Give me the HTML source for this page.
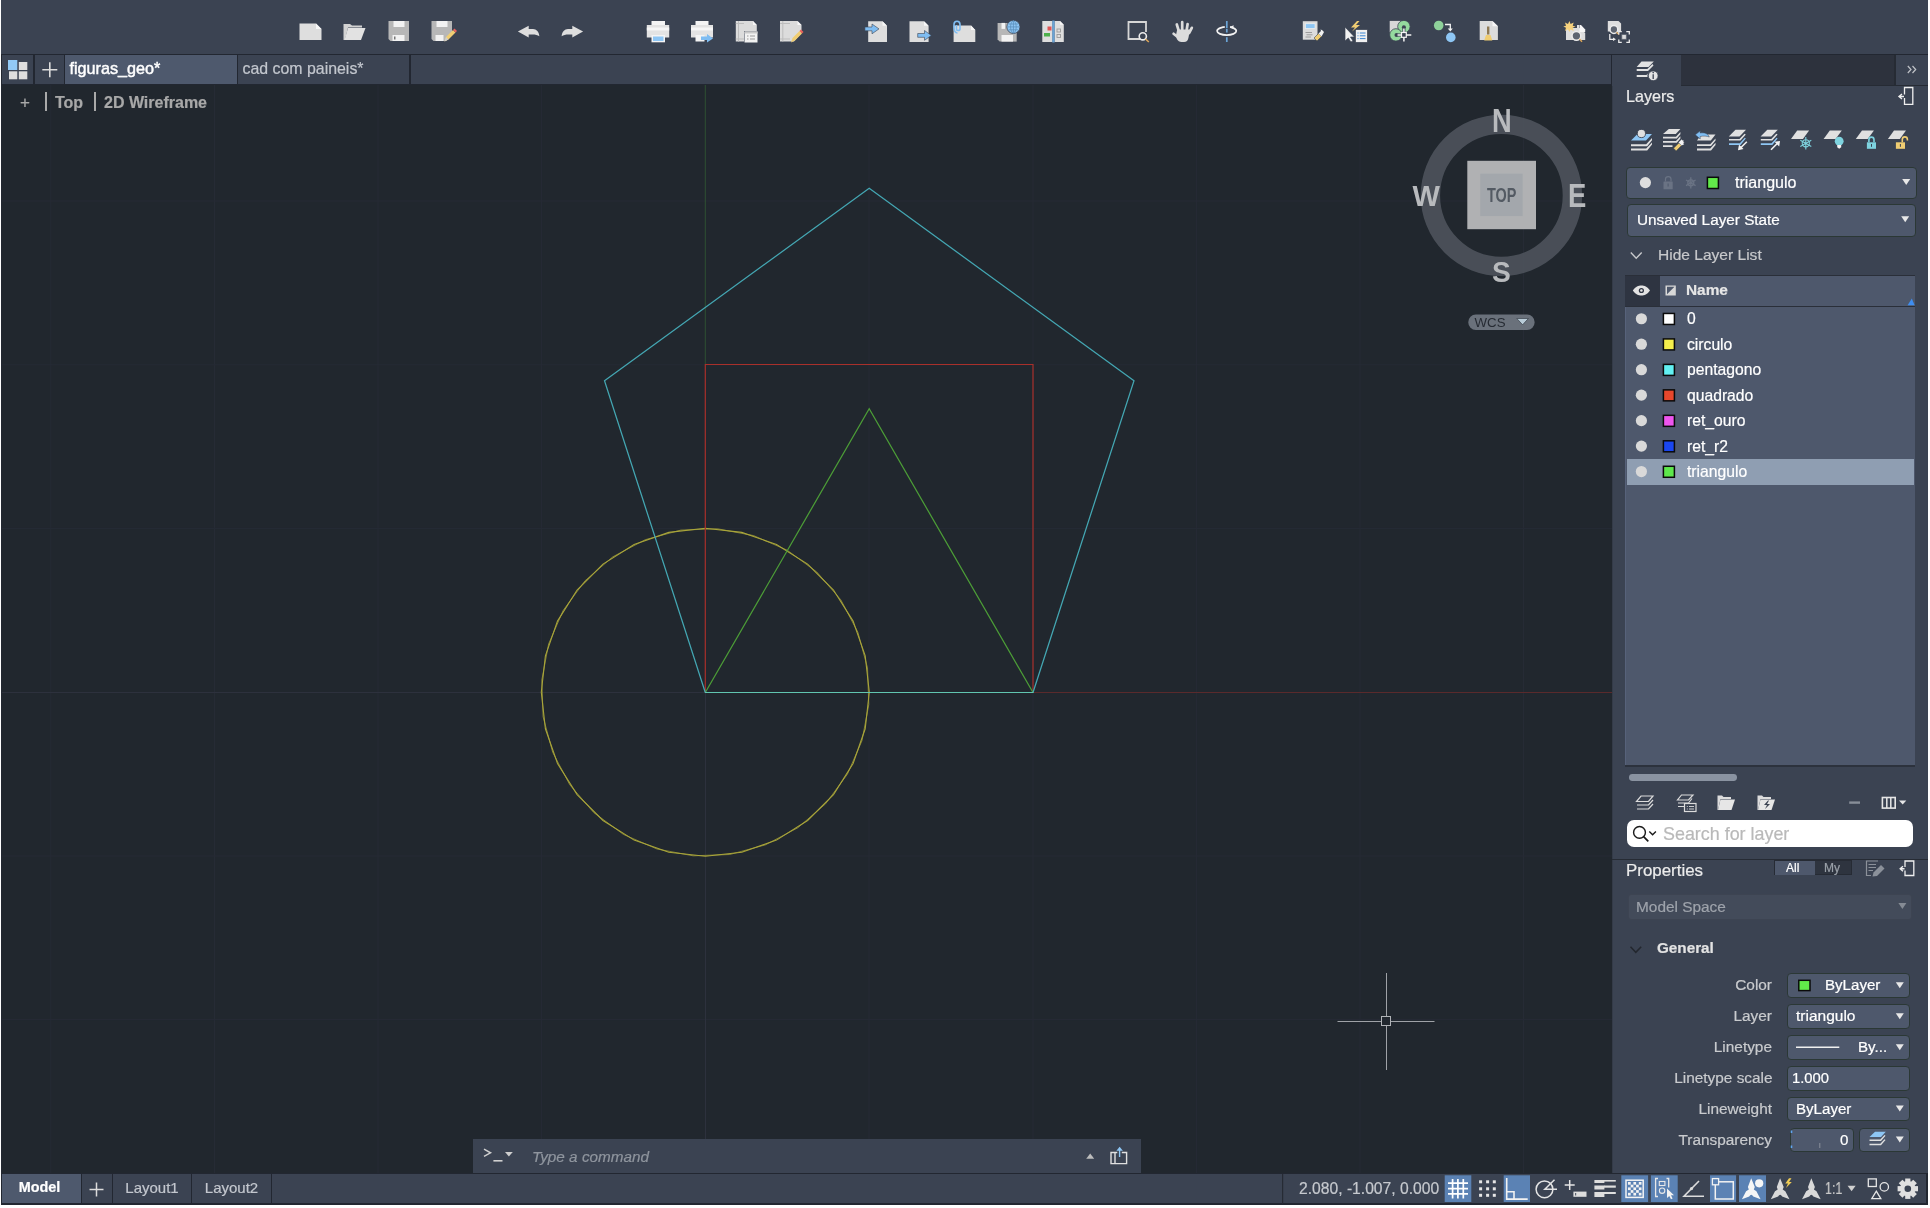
<!DOCTYPE html>
<html><head><meta charset="utf-8">
<style>
html,body{margin:0;padding:0;background:#fff;width:1930px;height:1208px;overflow:hidden}
*{box-sizing:border-box}
body{font-family:"Liberation Sans",sans-serif;position:relative}
.a{position:absolute}
#app{position:absolute;left:1px;top:0;width:1927px;height:1205px;background:#222731;overflow:hidden}
#tb{position:absolute;left:0;top:0;width:1927px;height:54px;background:#3b4352}
#tabrow{position:absolute;left:0;top:54px;width:1611px;height:31px;background:#222731}
.tab{position:absolute;top:1px;height:29px;background:#3b4352;color:#c3c7ce;font-size:15px;line-height:28px}
#vp{position:absolute;left:1px;top:85px;width:1610px;height:1088px;background:#21272e;overflow:hidden}
#panel{position:absolute;left:1611px;top:55px;width:316px;height:1118px;background:#3b4352}
.dd{position:absolute;background:#4e586c;border:1.5px solid #2b3835;border-radius:4px}
.wt{position:absolute;white-space:nowrap;color:#fff;font-size:15.5px;line-height:18px}
.lb{position:absolute;white-space:nowrap;color:#c9cbce;font-size:15.4px;line-height:18px;text-align:right}
#sb{position:absolute;left:0;top:1173px;width:1927px;height:32px;background:#222731}
.stab{position:absolute;top:1px;height:29px;background:#3b4352;color:#c3c7ce;font-size:15px;line-height:27px;text-align:center}
.t{position:absolute;white-space:nowrap}
.t,.wt,.lb,.tab,.stab{will-change:transform;-webkit-text-stroke:0.2px currentColor}
</style></head>
<body>
<div id="app">
  <div id="tb"></div>
<svg class="a" style="left:-1px;top:0" width="1930" height="54" viewBox="0 0 1930 54">
<g id="tbi">
 <!-- New -->
 <path d="M299.5 23.5H316L321.5 29V40H299.5Z" fill="#dedede"/><path d="M316 23.5V29H321.5Z" fill="#f7f7f7"/>
 <!-- Open -->
 <path d="M343.5 24H350L352 25.5H362V27.5H348L345 40H343.5Z" fill="#d2d2d2"/><path d="M348 28H365.5L361 40H344.5Z" fill="#e2e2e2"/>
 <!-- Save -->
 <path d="M388.5 21H409V41H390.5L388.5 39Z" fill="#b7b7b7"/><rect x="393.5" y="21" width="11" height="6" fill="#f2f2f2"/><rect x="392.5" y="35" width="12" height="6" fill="#f2f2f2"/><rect x="394" y="36.5" width="1.5" height="3" fill="#777"/>
 <!-- SaveAs -->
 <path d="M431.5 21H452V34L446 41H433.5L431.5 39Z" fill="#b7b7b7"/><rect x="436.5" y="21" width="11" height="6" fill="#f2f2f2"/><rect x="435.5" y="35" width="8" height="6" fill="#f2f2f2"/>
 <path d="M444.5 41.5L446 37L453 30L455.5 32.5L448.5 39.5Z" fill="#f0cd72"/><path d="M453 30L454.5 28.5L457 31L455.5 32.5Z" fill="#e8615c"/><path d="M444.5 41.5L446 37L448.5 39.5Z" fill="#cfcfcf"/>
 <!-- Undo -->
 <path d="M517.9 31.5L528.7 25.7V29H533C536.5 29 539 32 539.4 36.2C537.5 35 535.5 34.4 532.5 34.4H528.7V37.5Z" fill="#dedede"/>
 <!-- Redo -->
 <path d="M583.1 31.5L572.3 25.7V29H568C564.5 29 562 32 561.6 36.2C563.5 35 565.5 34.4 568.5 34.4H572.3V37.5Z" fill="#dedede"/>
 <!-- Print -->
 <rect x="651.5" y="21" width="13.5" height="6.5" fill="#f4f4f4"/><path d="M646.8 25H669.2V37.5H646.8Z" fill="#e3e3e3"/><rect x="646.8" y="27.5" width="22.4" height="3" fill="#f6f6f6"/><rect x="651.5" y="35" width="13.5" height="7.3" fill="#f4f4f4"/><rect x="653" y="36.5" width="10.5" height="4.5" fill="#8ec6f4"/>
 <!-- Publish -->
 <rect x="695.5" y="21" width="13" height="6.5" fill="#f4f4f4"/><path d="M691 25H713V37.5H691Z" fill="#e3e3e3"/><rect x="691" y="27.5" width="22" height="3" fill="#f6f6f6"/><rect x="695.5" y="35" width="9" height="6.5" fill="#f4f4f4"/>
 <path d="M701 36.5H707V34L713 38.5L707 42.5V40H701Z" fill="#7fbdf2"/>
 <!-- Page setup -->
 <path d="M735.8 21H753L756.8 25V31H744V41.5H735.8Z" fill="#dcdcdc"/><path d="M738.5 21V41.5M735.8 23.5H744M735.8 39H744" stroke="#bdbdbd" stroke-width="1"/><path d="M753 21V25H756.8Z" fill="#f7f7f7"/>
 <rect x="744.5" y="31.5" width="13" height="11" fill="#f2f2f2"/><rect x="744.5" y="31.5" width="13" height="2" fill="#c9c9c9"/><path d="M747 36H748.5M750 36H755M747 39H748.5M750 39H755" stroke="#9a9a9a" stroke-width="1.2"/>
 <!-- Plot style -->
 <path d="M780 21H797.5L801.5 25V33L794 41.5H780Z" fill="#dcdcdc"/><path d="M782.8 21V41.5M780 23.5H790M780 39H790" stroke="#bdbdbd" stroke-width="1"/><path d="M797.5 21V25H801.5Z" fill="#f7f7f7"/>
 <path d="M791 42.5L792.5 38L799.5 31L802 33.5L795 40.5Z" fill="#f0cd72"/><path d="M799.5 31L801 29.5L803.5 32L802 33.5Z" fill="#e8615c"/>
 <!-- Import -->
 <path d="M868.2 21.2H882.5L887 25.7V41.9H868.2Z" fill="#dedede"/><path d="M882.5 21.2V25.7H887Z" fill="#f7f7f7"/><path d="M864.9 27H872V24L879 28.9L872 33.8V30.8H864.9Z" fill="#7fbdf2" stroke="#3b4352" stroke-width=".6"/>
 <!-- Export -->
 <path d="M909.5 21.2H924L928.6 25.7V41.9H909.5Z" fill="#dedede"/><path d="M924 21.2V25.7H928.6Z" fill="#f7f7f7"/><path d="M917.7 33.5H924.5V30.5L931.3 35.4L924.5 40.3V37.3H917.7Z" fill="#7fbdf2" stroke="#3b4352" stroke-width=".6"/>
 <!-- Attach -->
 <path d="M953.6 25.6H971L975.3 30V41.9H953.6Z" fill="#dedede"/><path d="M971 25.6V30H975.3Z" fill="#f7f7f7"/><path d="M957.5 33C954.5 33 954 30 954 27V24.5C954 22 955.5 21.2 957 21.2C958.8 21.2 960 22.5 960 24.5V29C960 30 959 30.5 958 30.5C957 30.5 956.5 30 956.5 29V25" fill="none" stroke="#7fbdf2" stroke-width="1.6"/>
 <!-- eTransmit -->
 <path d="M997.6 22.9H1011V41.6H999.6L997.6 39.6Z" fill="#b7b7b7"/><path d="M1011 30H1016.7V41.6H1011Z" fill="#b7b7b7"/><rect x="1001.5" y="22.9" width="3.5" height="6" fill="#f2f2f2"/><rect x="1001.5" y="35" width="11.5" height="6.6" fill="#f2f2f2"/>
 <circle cx="1013.4" cy="26.9" r="6.6" fill="#8ec6f4" stroke="#3b4352" stroke-width=".8"/><path d="M1013.4 20.6V33.2M1007.2 26.9H1019.6M1008.5 24H1018.3M1008.5 29.8H1018.3" stroke="#5a8fbd" stroke-width=".8"/><ellipse cx="1013.4" cy="26.9" rx="2.8" ry="6" fill="none" stroke="#5a8fbd" stroke-width=".8"/>
 <!-- Compare -->
 <path d="M1042.3 21H1052.5V42H1042.3Z" fill="#dedede"/><path d="M1054.5 21H1060L1063.8 24.8V42H1054.5Z" fill="#dedede"/><path d="M1060 21V24.8H1063.8Z" fill="#f7f7f7"/><rect x="1052.3" y="20.5" width="2.3" height="22" fill="#6aa4d6"/>
 <rect x="1047.5" y="26.5" width="4" height="4" fill="#e05555"/><rect x="1044" y="33" width="6" height="3.5" fill="#4cb04c"/><rect x="1057" y="29" width="3.5" height="3" fill="none" stroke="#9a9a9a" stroke-width=".9"/><rect x="1057" y="34.5" width="3.5" height="3" fill="none" stroke="#9a9a9a" stroke-width=".9"/>
 <!-- Zoom window -->
 <path d="M1140 39H1128.5V22H1146V32" fill="none" stroke="#d6d6d6" stroke-width="1.8"/><circle cx="1142.8" cy="36.3" r="3.6" fill="#3b4352" stroke="#ececec" stroke-width="1.6"/><path d="M1145.5 39L1148.8 42" stroke="#e0a85a" stroke-width="1.5"/>
 <!-- Pan -->
 <g stroke="#dcdcdc" stroke-width="2.7" stroke-linecap="round" fill="none"><path d="M1173.6 33.8L1178 37.2M1176.8 24.5L1178.8 31M1182.2 22.2V30M1187.6 24L1186.6 30.5M1191.8 27.8L1189.2 33"/></g>
 <path d="M1177.2 29.5H1190L1188.5 37.5C1188 40.5 1186.5 42 1184 42H1181.5C1179.5 42 1178 41 1176.8 39L1176 35Z" fill="#dcdcdc"/>
 <!-- Orbit -->
 <ellipse cx="1226.7" cy="31" rx="9.6" ry="4.1" fill="none" stroke="#f2f2f2" stroke-width="1.7"/>
 <rect x="1224.8" y="25" width="5.2" height="3.2" fill="#3b4352"/>
 <path d="M1229.6 27L1233.6 25.2L1233.4 28.8Z" fill="#f2f2f2"/>
 <path d="M1226.8 21V28.2M1226.8 29V32.6M1226.8 37.3V42.1" stroke="#6aa4d6" stroke-width="1.7"/>
 <!-- Block/attr -->
 <path d="M1302.8 21.2H1317.5V39.7H1302.8Z" fill="#dcdcdc"/><rect x="1305.5" y="23.8" width="9.5" height="4.5" fill="#8ec6f4" stroke="#f5f5f5" stroke-width=".6"/><path d="M1305.5 32.5H1312M1306.5 34.8H1312.5M1305.5 37H1311" stroke="#8a8a8a" stroke-width=".8"/>
 <path d="M1314 38L1318.5 33.5L1321.5 36.5L1317 41Z" fill="#f0cd72" stroke="#3b4352" stroke-width=".6"/><path d="M1318.5 33.5L1321 31L1320.5 29.5L1322 30L1324 32L1323.5 33L1321.5 36.5Z" fill="#f0f0f0"/>
 <!-- Quick select -->
 <path d="M1345 27V41L1348.3 38L1350.8 42L1353 41L1350.5 37H1354.5Z" fill="#f2f2f2" stroke="#3b4352" stroke-width=".7"/><path d="M1357 21L1351 27.5H1355L1352 31.5L1360 25H1356L1359.5 21Z" fill="#f0cd72"/>
 <rect x="1355.6" y="29.7" width="11.7" height="12.6" fill="#f0f0f0" stroke="#3b4352" stroke-width=".6"/><path d="M1357.5 33H1358.5M1359.8 33H1365.5M1357.5 35.8H1358.5M1359.8 35.8H1365.5M1357.5 38.6H1358.5M1359.8 38.6H1365.5" stroke="#3a86d4" stroke-width="1"/>
 <!-- Select similar -->
 <rect x="1389.7" y="20.9" width="12" height="11.5" fill="#d8d8d8"/><circle cx="1403.9" cy="26.6" r="6.2" fill="#94d99e" stroke="#3b4352" stroke-width=".8"/><circle cx="1403.9" cy="27.2" r="2" fill="#3b4352"/><circle cx="1395.9" cy="34.9" r="6.2" fill="#94d99e" stroke="#3b4352" stroke-width=".8"/><circle cx="1396.5" cy="34.9" r="2" fill="#3b4352"/>
 <path d="M1403.9 28.5V41.5M1397.5 34.9H1411.3" stroke="#3b4352" stroke-width="3"/><path d="M1403.9 28.5V41.5M1397.5 34.9H1411.3" stroke="#f4f4f4" stroke-width="1.5"/><rect x="1401.5" y="32.5" width="4.8" height="4.8" fill="#3b4352" stroke="#f4f4f4" stroke-width="1.2"/>
 <!-- Data link -->
 <circle cx="1438.7" cy="25.5" r="4.8" fill="#8ed19a"/><circle cx="1450.8" cy="37.4" r="4.8" fill="#8ec6f4"/><path d="M1445 24.5H1450.3V29" fill="none" stroke="#f4f4f4" stroke-width="1.3"/><path d="M1447.8 28.5H1452.8L1450.3 31.5Z" fill="#f4f4f4"/>
 <!-- Purge-like doc -->
 <path d="M1479.7 20.9H1492.5L1497.9 26.3V40H1479.7Z" fill="#dcdcdc"/><path d="M1492.5 20.9V26.3H1497.9Z" fill="#f7f7f7"/><rect x="1487" y="26.5" width="2.4" height="8" fill="#8f7a55"/><path d="M1484.2 40.5L1486 35H1490.5L1492.3 40.5Z" fill="#f0cd72"/>
 <!-- Sixth -->
 <path d="M1566 28H1579.5L1585.2 33V40H1566Z" fill="#dedede"/><path d="M1579.5 25H1581L1585.2 29.5V32H1579.5Z" fill="#f7f7f7"/><rect x="1577" y="25" width="2" height="3" fill="#dedede"/>
 <path d="M1569.4 21L1570.6 24L1573.7 22.5L1572.7 25.8L1575.5 26.5L1572.7 27.8L1573.7 31L1570.6 29.3L1569.4 32L1568 29.3L1565 31L1566 27.8L1563.3 26.5L1566 25.8L1565 22.5L1568 24Z" fill="#f6d27e"/>
 <circle cx="1576.4" cy="35.8" r="4.4" fill="#5d6470" stroke="#ececec" stroke-width="1.5"/><path d="M1579.5 39L1582 41.7" stroke="#e0a85a" stroke-width="1.4"/>
 <!-- Seventh -->
 <path d="M1607.8 20.9H1618.5L1621.1 23.5V31.6H1607.8Z" fill="#dedede"/><circle cx="1613.9" cy="29.5" r="3.9" fill="#5d6470" stroke="#ececec" stroke-width="1.5"/><path d="M1616.5 32.2L1619 34.6" stroke="#e0a85a" stroke-width="1.3"/>
 <path d="M1609.8 34V39.3H1613.5" fill="none" stroke="#ececec" stroke-width="1.3"/><path d="M1613 37.5L1616 39.3L1613 41Z" fill="#ececec"/>
 <path d="M1618.8 34.5V31.6H1621.8M1626.3 31.6H1629.3V34.5M1629.3 39.4V42.3H1626.3M1621.8 42.3H1618.8V39.4" fill="none" stroke="#ececec" stroke-width="1.3"/><rect x="1621.8" y="34.6" width="4.5" height="4.7" fill="#dcdcdc" stroke="#5d6470" stroke-width=".8"/>
</g>
</svg>

  <div id="tabrow">
    <div class="tab" style="left:1px;width:31px"></div>
    <div class="tab" style="left:34px;width:29px"></div>
    <div class="tab" style="left:64px;width:172px;background:#4e596d;color:#fff;padding-left:4.5px;font-size:16.2px;line-height:26.5px;-webkit-text-stroke:.45px #fff">figuras_geo*</div>
    <div class="tab" style="left:237px;width:171px;padding-left:4.5px;font-size:15.9px;line-height:27px">cad com paineis*</div>
    <div class="tab" style="left:410px;width:1200px"></div>
    <svg class="a" style="left:-1px;top:-54px" width="70" height="90" viewBox="0 0 70 90">
      <rect x="8" y="60" width="9.3" height="10" fill="#92c9f5"/><rect x="18.8" y="62" width="8.5" height="8" fill="#dedede"/>
      <rect x="9" y="71.3" width="8.3" height="8" fill="#dedede"/><rect x="18.8" y="71.3" width="8.5" height="8" fill="#dedede"/>
      <path d="M42.3 69.8H57.3M49.8 62.3V77.3" stroke="#dcdcdc" stroke-width="1.6"/>
    </svg>
  </div>
  <div id="vp"></div>
<svg class="a" style="left:-1px;top:0" width="1930" height="1208" viewBox="0 0 1930 1208">
 <defs><clipPath id="vpc"><rect x="2" y="85" width="1610" height="1088"/></clipPath></defs>
 <g clip-path="url(#vpc)" fill="none" stroke-width="1">
  <g stroke="#262b35">
   <path d="M50.8 85V1173M214.5 85V1173M378 85V1173M541.6 85V1173M869 85V1173M1033 85V1173M1196.6 85V1173M1360 85V1173M1523.5 85V1173"/>
   <path d="M2 201H1612M2 364.8H1612M2 528.4H1612M2 856H1612M2 1019.6H1612"/>
  </g>
  <path d="M705.5 692.5V1173M2 692.5H705" stroke="#2d313d"/>
  <path d="M1033 692.5H1612" stroke="#5a2a2c"/>
  <path d="M705.3 85V364" stroke="#2f5133"/>
  <polygon points="705.3,856.3 741.8,852.2 776.5,840.1 807.6,820.5 833.5,794.6 853.1,763.5 865.2,728.8 869.3,692.3 865.2,655.8 853.1,621.1 833.5,590.0 807.6,564.1 776.5,544.5 741.8,532.4 705.3,528.3 668.8,532.4 634.1,544.5 603.0,564.1 577.1,590.0 557.5,621.1 545.4,655.8 541.3,692.3 545.4,728.8 557.5,763.5 577.1,794.6 603.0,820.5 634.1,840.1 668.8,852.2" stroke="#a9a53a" stroke-width="1.1"/><polygon points="729.8,854.5 765.3,844.9 797.8,827.8 825.6,803.8 847.4,774.2 862.0,740.6 868.8,704.5 867.5,667.8 857.9,632.3 840.8,599.8 816.8,572.0 787.2,550.2 753.6,535.6 717.5,528.8 680.8,530.1 645.3,539.7 612.8,556.8 585.0,580.8 563.2,610.4 548.6,644.0 541.8,680.1 543.1,716.8 552.7,752.3 569.8,784.8 593.8,812.6 623.4,834.4 657.0,849.0 693.1,855.8" stroke="#a9a53a" stroke-opacity=".7" stroke-width="1"/>
  <path d="M705.3 692.5V364.5H1033V692.5" stroke="#a8302b" stroke-width="1.2"/>
  <path d="M705.3 692.5L869.2 408.8L1033 692.5" stroke="#4c9d37" stroke-width="1.25"/>
  <path d="M705.3 692.5L604.5 380.8L869.2 188.3L1134 380.8L1033 692.5" stroke="#44a7b3" stroke-width="1.25"/>
  <path d="M705 692.5H1033.5" stroke="#61c6b0"/>
  <g stroke="#9fa2a7"><path d="M1337.5 1021.5H1381.5M1391 1021.5H1434.5M1386.5 973V1017M1386.5 1026V1070"/><rect x="1381.5" y="1016.5" width="9" height="9" stroke="#b0b3b7"/></g>
 </g>
</svg>
  
<div class="t" style="left:19px;top:94.3px;color:#a9a9a9;font-size:17px;line-height:17px">+</div>
<div class="a" style="left:44px;top:92px;width:2px;height:19px;background:#a9a9a9"></div>
<div class="t" id="lTop" style="left:53.5px;top:94.4px;color:#a8a8a8;font-size:16px;font-weight:bold;line-height:17px">Top</div>
<div class="a" style="left:93px;top:92px;width:2px;height:19px;background:#a9a9a9"></div>
<div class="t" id="lWire" style="left:102.5px;top:94.4px;color:#a8a8a8;font-size:16px;font-weight:bold;line-height:17px">2D Wireframe</div>

<div class="a" style="left:472px;top:1139px;width:668px;height:34px;background:#3b4352"></div>
<svg class="a" style="left:471px;top:1139px" width="670" height="34" viewBox="472 1139 670 34">
  <path d="M484 1149.2L490.5 1152.8L484 1156.3" fill="none" stroke="#d0d0d0" stroke-width="1.5"/>
  <path d="M493.4 1160.8H502.5" stroke="#d0d0d0" stroke-width="1.6"/>
  <path d="M505 1152H512.8L508.9 1156.4Z" fill="#cfcfcf"/>
  <path d="M1086.2 1158.8H1094.2L1090.2 1153.4Z" fill="#bdbdbd"/>
  <path d="M1117.3 1152.5H1111V1163.6H1126.6V1152.5H1121.8M1115 1152.5V1163.6" fill="none" stroke="#e0e0e0" stroke-width="1.4"/>
  <path d="M1119.6 1157V1150" stroke="#8ec6f4" stroke-width="1.4"/><path d="M1116.4 1150.8H1122.9L1119.6 1146.7Z" fill="#8ec6f4"/>
</svg>
<div class="t" style="left:531px;top:1147.5px;color:#8f959e;font-size:15.3px;font-style:italic;line-height:18px">Type a command</div>
<div id="panel"></div>

<svg class="a" style="left:1399px;top:95px;will-change:transform" width="200" height="250" viewBox="1400 95 200 250">
  <circle cx="1501.4" cy="195.4" r="71" fill="none" stroke="#4e535c" stroke-opacity=".9" stroke-width="19.4"/>
  <rect x="1467.3" y="160.8" width="68.7" height="68.4" fill="#b5b6b8" fill-opacity=".97"/>
  <rect x="1480.3" y="173.7" width="42.3" height="42.4" fill="#a3a7ac"/>
  <text x="1501.7" y="202.3" text-anchor="middle" font-family="Liberation Sans" font-weight="bold" font-size="19.5" fill="#535a63" textLength="29.4" lengthAdjust="spacingAndGlyphs">TOP</text>
  <g font-family="Liberation Sans" font-weight="bold" fill="#b8babd" text-anchor="middle">
   <text x="1501.8" y="132.3" font-size="33" textLength="19.7" lengthAdjust="spacingAndGlyphs">N</text>
   <text x="1501.4" y="282" font-size="30" textLength="18.8" lengthAdjust="spacingAndGlyphs">S</text>
   <text x="1426.1" y="205.8" font-size="29" textLength="27.4" lengthAdjust="spacingAndGlyphs">W</text>
   <text x="1577.2" y="206.8" font-size="33" textLength="18.3" lengthAdjust="spacingAndGlyphs">E</text>
  </g>
  <rect x="1468.3" y="314.5" width="66.3" height="15.5" rx="7.5" fill="#6a717b"/>
  <text x="1490" y="326.9" text-anchor="middle" font-family="Liberation Sans" font-size="13" fill="#262b33" textLength="31" lengthAdjust="spacingAndGlyphs">WCS</text>
  <path d="M1516.8 318.5H1528.4L1522.6 324.8Z" fill="#b9ccd8" stroke="#3a414b" stroke-width=".7"/>
</svg>

  <div id="sb">
    <div class="stab" style="left:1px;width:79px;background:#4e596d;color:#fff;font-weight:bold;font-size:14.4px;padding-right:4px">Model</div>
    <div class="stab" style="left:81px;width:30px"><svg class="a" style="left:0;top:0" width="30" height="30"><path d="M7.5 15.5H21.5M14.5 8.5V22.5" stroke="#dcdcdc" stroke-width="1.5"/></svg></div>
    <div class="stab" style="left:112px;width:78px">Layout1</div>
    <div class="stab" style="left:191px;width:79px">Layout2</div>
    <div class="stab" style="left:271px;width:1010px"></div>
    <div class="stab" style="left:1282px;width:643px"></div>
  </div>
</div>

<div id="abs" class="a" style="left:0;top:0;width:1930px;height:1208px">
 <!-- panel tab strip -->
 <div class="a" style="left:1681px;top:55px;width:213px;height:30px;background:#2d323d"></div>
 <div class="a" style="left:1894px;top:55px;width:2px;height:30px;background:#262b34"></div>
 <div class="a" style="left:1681px;top:85px;width:247px;height:1px;background:#262b34"></div>
 <div class="t" style="left:1626px;top:85.5px;font-size:16.1px;line-height:20px;color:#ececec">Layers</div>
 <div class="dd" style="left:1625.5px;top:166.5px;width:291px;height:32.5px"></div>
 <div class="wt" style="left:1735.2px;top:174px;font-size:16px">triangulo</div>
 <div class="dd" style="left:1626.5px;top:204px;width:289px;height:32.5px"></div>
 <div class="wt" style="left:1636.6px;top:210.5px;font-size:15.3px">Unsaved Layer State</div>
 <div class="t" style="left:1657.7px;top:246px;font-size:15.56px;line-height:18px;color:#c8c9cc">Hide Layer List</div>
 <!-- header -->
 <div class="a" style="left:1625px;top:275px;width:290px;height:1px;background:#2a2f39"></div>
 <div class="a" style="left:1625px;top:276px;width:35px;height:30px;background:#2e3441"></div>
 <div class="a" style="left:1660px;top:276px;width:255px;height:30px;background:#4e586c"></div>
 <div class="a" style="left:1625px;top:306px;width:290px;height:1px;background:#2a2f39"></div>
 <div class="t" style="left:1686px;top:281px;font-size:15.4px;line-height:18px;color:#e6e6e6;font-weight:bold">Name</div>
 <!-- list -->
 <div class="a" style="left:1625px;top:307px;width:290px;height:458px;background:#4e586c"></div>
 <div class="a" style="left:1627px;top:459px;width:287px;height:26px;background:#8f9eb2"></div>
 <svg class="a" style="left:1612px;top:307px" width="316" height="460" viewBox="1612 307 316 460">
<circle cx="1641.4" cy="318.75" r="5.6" fill="#d9d9d9"/>
<rect x="1663.4" y="313.45" width="11" height="11" fill="#ffffff" stroke="#0a0a0a" stroke-width="1.5"/>
<circle cx="1641.4" cy="344.22" r="5.6" fill="#d9d9d9"/>
<rect x="1663.4" y="338.92" width="11" height="11" fill="#f4ee4c" stroke="#0a0a0a" stroke-width="1.5"/>
<circle cx="1641.4" cy="369.69" r="5.6" fill="#d9d9d9"/>
<rect x="1663.4" y="364.39" width="11" height="11" fill="#62f0f2" stroke="#0a0a0a" stroke-width="1.5"/>
<circle cx="1641.4" cy="395.16" r="5.6" fill="#d9d9d9"/>
<rect x="1663.4" y="389.86" width="11" height="11" fill="#e8472c" stroke="#0a0a0a" stroke-width="1.5"/>
<circle cx="1641.4" cy="420.63" r="5.6" fill="#d9d9d9"/>
<rect x="1663.4" y="415.33" width="11" height="11" fill="#ee55ee" stroke="#0a0a0a" stroke-width="1.5"/>
<circle cx="1641.4" cy="446.10" r="5.6" fill="#d9d9d9"/>
<rect x="1663.4" y="440.80" width="11" height="11" fill="#1a46ef" stroke="#0a0a0a" stroke-width="1.5"/>
<circle cx="1641.4" cy="471.57" r="5.6" fill="#d9d9d9"/>
<rect x="1663.4" y="466.27" width="11" height="11" fill="#5ee84c" stroke="#0a0a0a" stroke-width="1.5"/>
</svg>
<div class="wt" style="left:1687.2px;top:310.25px;font-size:15.7px">0</div>
<div class="wt" style="left:1687.2px;top:335.72px;font-size:15.7px">circulo</div>
<div class="wt" style="left:1687.2px;top:361.19px;font-size:15.7px">pentagono</div>
<div class="wt" style="left:1687.2px;top:386.66px;font-size:15.7px">quadrado</div>
<div class="wt" style="left:1687.2px;top:412.13px;font-size:15.7px">ret_ouro</div>
<div class="wt" style="left:1687.2px;top:437.60px;font-size:15.7px">ret_r2</div>
<div class="wt" style="left:1687.2px;top:463.07px;font-size:15.7px">triangulo</div>
 <div class="a" style="left:1625px;top:765px;width:290px;height:1.5px;background:#2c323d"></div>
 <div class="a" style="left:1625px;top:307px;width:1px;height:458px;background:#57627a"></div>
 <div class="a" style="left:1612px;top:86px;width:1px;height:1087px;background:#343b48"></div>
 <!-- scrollbar -->
 <div class="a" style="left:1628.8px;top:774.2px;width:108.2px;height:6.8px;border-radius:3.4px;background:#8a93a1"></div>
 <!-- search -->
 <div class="a" style="left:1627px;top:820px;width:286px;height:27px;border-radius:7px;background:#fff"></div>
 <div class="t" style="left:1663px;top:824px;font-size:17.9px;line-height:20px;color:#b9b9b9">Search for layer</div>
 <div class="a" style="left:1612px;top:859px;width:316px;height:1px;background:#262b34"></div>
 <div class="t" style="left:1626px;top:861px;font-size:16.9px;line-height:20px;color:#ececec">Properties</div>
 <div class="a" style="left:1773.6px;top:860.2px;width:78.7px;height:15.1px;background:#2e343f;border:1px solid #262b34"></div>
 <div class="a" style="left:1774.5px;top:861px;width:40px;height:13.5px;background:#4e586c"></div>
 <div class="t" style="left:1785.5px;top:860.5px;font-size:12px;line-height:15px;color:#fff">All</div>
 <div class="t" style="left:1824px;top:860.5px;font-size:12px;line-height:15px;color:#9aa0a8">My</div>
 <div class="a" style="left:1627.7px;top:893.9px;width:284px;height:26.4px;background:#434b5a;border:1px solid #3d4452;border-radius:3px"></div>
 <div class="t" style="left:1636.4px;top:897.5px;font-size:15.4px;line-height:18px;color:#9ea3ab">Model Space</div>
 <div class="t" style="left:1656.5px;top:939px;font-size:15.25px;line-height:18px;color:#e3e3e3;font-weight:bold">General</div>
 <svg class="a" style="left:1612px;top:55px" width="316" height="800" viewBox="1612 55 316 800">
 <!-- layers info tab icon -->
 <path d="M1641.5 61.5H1653.8L1648.5 67H1636.7Z" fill="#e2e2e2"/>
 <path d="M1653.5 65.5L1648 71H1636.7V69H1647.3L1652.5 64Z" fill="#e2e2e2"/>
 <path d="M1647.5 73.5L1646.5 75H1636.7V77H1647.5Z" fill="#e2e2e2"/>
 <circle cx="1653.2" cy="75.8" r="4.9" fill="#e4e4e4" stroke="#3b4352" stroke-width=".8"/>
 <path d="M1653.2 74.3V79" stroke="#3b4352" stroke-width="1.3"/><circle cx="1653.2" cy="72.6" r=".8" fill="#3b4352"/>
 <!-- >> -->
 <path d="M1907.8 66L1911 69.5L1907.8 73M1912.5 66L1915.7 69.5L1912.5 73" fill="none" stroke="#bfc2c7" stroke-width="1.2"/>
 <!-- dock -->
 <path d="M1904.5 94.5V87.5H1912.8V104.3H1904.5V98" fill="none" stroke="#efefef" stroke-width="1.3"/>
 <path d="M1904 96.5H1899.5M1902 94L1899 96.5L1902 99" fill="none" stroke="#efefef" stroke-width="1.4"/>
 <!-- icon 1 new layer -->
 <path d="M1631 144.2H1646.2L1652 138V140.2L1647.2 146.2H1631Z M1631 148.6H1646.2L1652 142.4V144.6L1647.2 150.6H1631Z" fill="#e0e0e0"/>
 <path d="M1637.5 134H1652L1646 140.6H1631Z" fill="#8ec6f4"/>
 <circle cx="1641.4" cy="133.5" r="4.1" fill="#e0e0e0" stroke="#3b4352" stroke-width=".9"/>
 <!-- icon 2 brush -->
 <path d="M1668.8 129H1680.4L1675.8 134H1663Z" fill="#e0e0e0"/>
 <path d="M1663 136.8H1676L1680.4 132V134.2L1676.8 138.6H1663ZM1663 141H1676L1680.4 136.2V138.4L1676.8 142.8H1663ZM1663 145.2H1672.5V147H1663Z" fill="#e0e0e0"/>
 <path d="M1673.5 148.2L1678.8 142.9L1681.5 145.6L1676.2 150.9Z" fill="#f0cd72" stroke="#3b4352" stroke-width=".6"/>
 <path d="M1678.5 142.6L1681.8 139.3L1682.2 140.6L1683.5 140L1683.2 141.6L1684.4 142.2L1683.1 143.1L1684.2 144.3L1681.6 145.5Z" fill="#f2f2f2"/>
 <!-- icon 3 undo -->
 <path d="M1701.5 134.5H1715.5L1710.8 140.5H1697Z" fill="#e0e0e0"/>
 <path d="M1697 144.2H1710.2L1715.5 138.4V140.6L1711 146H1697ZM1697 148.6H1710.2L1715.5 142.8V145L1711 150.4H1697Z" fill="#e0e0e0"/>
 <path d="M1695.3 134.8L1700.2 130.8V133C1704.5 132.3 1707.8 133.5 1709.3 137C1706.8 136 1703.8 135.8 1700.2 136.5V139Z" fill="#7fbdf2" stroke="#3b4352" stroke-width=".5"/>
 <!-- icon 4 -->
 <path d="M1735.5 129.8H1746L1739.5 136.6H1728.8Z" fill="#e0e0e0"/>
 <path d="M1745.8 134.5L1740.5 140.5H1729V139H1739.5L1744.5 133.8Z" fill="#e0e0e0"/>
 <path d="M1745.8 138.5L1740.5 144.9H1729V143.2H1739.8L1744.8 137.8Z" fill="#8ec6f4"/>
 <path d="M1746.8 141.8L1740 148.5" stroke="#f2f2f2" stroke-width="1.6"/><path d="M1738 150.2L1739 144.5L1743.5 149Z" fill="#f2f2f2"/>
 <!-- icon 5 -->
 <path d="M1767.3 129.8H1777.8L1771.3 136.6H1760.6Z" fill="#e0e0e0"/>
 <path d="M1777.6 134.5L1772.3 140.5H1760.8V139H1771.3L1776.3 133.8Z" fill="#e0e0e0"/>
 <path d="M1777.6 138.5L1772.3 144.9H1760.8V143.2H1771.6L1776.6 137.8Z" fill="#8ec6f4"/>
 <path d="M1771 149.8L1778.5 142.3" stroke="#f2f2f2" stroke-width="1.6"/><path d="M1780 141L1774.5 141.8L1779.2 146.5Z" fill="#f2f2f2"/>
 <!-- icon 6 freeze -->
 <path d="M1797.2 130.4H1809.1L1802.9 138.9H1791Z" fill="#e0e0e0"/>
 <g stroke="#7ed3df" stroke-width="1.1" fill="none"><circle cx="1805.8" cy="143.3" r="3.6"/><path d="M1805.8 137V149.6M1800.3 140.2L1811.3 146.4M1800.3 146.4L1811.3 140.2"/></g>
 <!-- icon 7 on/off -->
 <path d="M1829.8 130.4H1841.8L1835.6 138.9H1823.6Z" fill="#e0e0e0"/>
 <circle cx="1839.2" cy="141.2" r="4.4" fill="#7ed3df"/><path d="M1837.2 145H1841.2V147.2L1839.2 148.8L1837.2 147.2Z" fill="#f2f2f2"/>
 <!-- icon 8 lock -->
 <path d="M1862 130.4H1873.9L1867.7 138.9H1855.8Z" fill="#e0e0e0"/>
 <path d="M1868.9 142.3V139.7C1868.9 136.3 1874 136.3 1874 139.7V142.3" fill="none" stroke="#7ed3df" stroke-width="1.6"/>
 <rect x="1866.9" y="142.3" width="9.1" height="6.5" fill="#7ed3df"/><rect x="1871" y="144" width="1" height="2.8" fill="#3b4352"/>
 <!-- icon 9 unlock -->
 <path d="M1894 130.4H1906L1899.8 138.9H1887.9Z" fill="#e0e0e0"/>
 <path d="M1902.3 142.3V139.5C1902.3 136 1907.4 136 1907.4 139.5V140.5" fill="none" stroke="#f0cd72" stroke-width="1.6"/>
 <rect x="1895.9" y="142.3" width="9.1" height="6.5" fill="#f0cd72"/><rect x="1899.9" y="144" width="1" height="2.8" fill="#3b4352"/>
 <!-- current layer dropdown icons -->
 <circle cx="1645.4" cy="182.6" r="5.6" fill="#dedede"/>
 <g fill="none" stroke="#6a7384" stroke-width="1.2"><path d="M1665.5 181.5V179C1665.5 175.8 1671 175.8 1671 179V181.5"/></g><rect x="1663.5" y="181.5" width="9.2" height="7.8" rx=".5" fill="#6a7384"/><rect x="1667.6" y="183.5" width="1" height="3" fill="#4e586c"/>
 <g stroke="#6a7384" stroke-width="1.3" fill="none"><circle cx="1690.8" cy="182.8" r="3"/><path d="M1690.8 177.2V188.4M1686 180L1695.6 185.6M1686 185.6L1695.6 180"/></g>
 <rect x="1707.4" y="177.3" width="11" height="11.2" fill="#62ea4a" stroke="#0a0a0a" stroke-width="1.5"/>
 <path d="M1902.2 179H1910.2L1906.2 185Z" fill="#e8e8e8"/>
 <path d="M1901.2 216.3H1909.2L1905.2 222.3Z" fill="#e8e8e8"/>
 <!-- chevron hide list -->
 <path d="M1630.8 252.6L1636.2 258.3L1641.7 252.6" fill="none" stroke="#c8c9cc" stroke-width="1.4"/>
 <!-- eye -->
 <path d="M1632.8 290.5C1635.5 286.5 1638.5 285.5 1641.4 285.5C1644.3 285.5 1647.3 286.5 1650 290.5C1647.3 294.5 1644.3 295.5 1641.4 295.5C1638.5 295.5 1635.5 294.5 1632.8 290.5Z" fill="#e3e3e3"/>
 <circle cx="1641.4" cy="290.5" r="2.6" fill="#2e3441"/><circle cx="1641.4" cy="290.5" r="1.3" fill="#e3e3e3"/>
 <!-- name col icon -->
 <rect x="1665.5" y="285.5" width="10.3" height="10" fill="#d8d8d8"/><path d="M1667 294.3L1674.5 286.8V286.8H1667Z" fill="#4e586c"/>
 <path d="M1907.6 305.2L1911.8 298.4L1914.6 305.2Z" fill="#3f8ef0"/>
 <!-- bottom icons -->
 <g fill="none" stroke="#dcdcdc" stroke-width="1.2">
  <path d="M1641 796H1653L1648.5 801.5H1636.5Z"/><path d="M1653 800L1648.5 805H1637M1653 804L1648.5 809H1637"/>
  <path d="M1681.5 795H1693L1688.5 800H1677.5Z"/><path d="M1692 798.5L1688.5 803H1678M1684 806.5H1678"/>
 </g>
 <rect x="1684.5" y="803.5" width="11.5" height="8" fill="#3b4352" stroke="#dcdcdc" stroke-width="1.2"/><path d="M1686.8 806.5H1687.8M1689 806.5H1694M1686.8 809H1687.8M1689 809H1694" stroke="#dcdcdc" stroke-width=".9"/>
 <path d="M1717.5 795.5H1722L1723.5 797H1731V799H1720.5L1718 810H1717.5Z" fill="#dcdcdc"/><path d="M1720.5 799.5H1735L1731.5 810H1718Z" fill="#e6e6e6"/>
 <path d="M1757.5 795.5H1762L1763.5 797H1771V799H1760.5L1758 810H1757.5Z" fill="#dcdcdc"/><path d="M1760.5 799.5H1775L1771.5 810H1758Z" fill="#e6e6e6"/>
 <path d="M1768 800.5L1764 805H1767L1765 809L1770 804H1767L1769 800.5Z" fill="#3b4352"/>
 <path d="M1849.2 802.6H1860" stroke="#878e98" stroke-width="2.4"/>
 <rect x="1882.4" y="797.5" width="12.8" height="10.6" fill="none" stroke="#e6e6e6" stroke-width="1.6"/><path d="M1886.8 797.5V808M1890.8 797.5V808" stroke="#e6e6e6" stroke-width="1.5"/>
 <path d="M1899 800.5H1906.3L1902.7 804.5Z" fill="#e6e6e6"/>
 <!-- search magnifier -->
 <circle cx="1639.5" cy="832.4" r="5.9" fill="none" stroke="#1a1a1a" stroke-width="1.4"/><path d="M1643.6 836.6L1648.3 841.3" stroke="#1a1a1a" stroke-width="1.7"/>
 <path d="M1649.3 831.6L1652.6 834.8L1655.9 831.6" fill="none" stroke="#1a1a1a" stroke-width="1.4"/>
</svg>

 <!-- props -->
 <div class="lb" style="left:1500px;width:272px;top:976px">Color</div>
 <div class="lb" style="left:1500px;width:272px;top:1007px">Layer</div>
 <div class="lb" style="left:1500px;width:272px;top:1038px">Linetype</div>
 <div class="lb" style="left:1500px;width:272.6px;top:1069px">Linetype scale</div>
 <div class="lb" style="left:1500px;width:272px;top:1099.5px">Lineweight</div>
 <div class="lb" style="left:1500px;width:272px;top:1130.5px">Transparency</div>
 <div class="dd" style="left:1786.5px;top:973px;width:123.5px;height:24.5px"></div>
 <div class="dd" style="left:1786.5px;top:1004px;width:123.5px;height:24.5px"></div>
 <div class="dd" style="left:1786.5px;top:1035px;width:123.5px;height:24.5px"></div>
 <div class="dd" style="left:1786.5px;top:1066px;width:123.5px;height:24.5px"></div>
 <div class="dd" style="left:1786.5px;top:1096.5px;width:123.5px;height:24.5px"></div>
 <div class="dd" style="left:1789.5px;top:1127.5px;width:64.8px;height:24px"></div>
 <div class="dd" style="left:1858.5px;top:1127.5px;width:51.5px;height:24px"></div>
 <div class="wt" style="left:1824.8px;top:976px;font-size:15.1px">ByLayer</div>
 <div class="wt" style="left:1795.5px;top:1007px;font-size:15.5px">triangulo</div>
 <div class="wt" style="left:1858px;top:1038px;font-size:15.1px">By...</div>
 <div class="wt" style="left:1791.9px;top:1069px;font-size:14.8px">1.000</div>
 <div class="wt" style="left:1795.5px;top:1099.5px;font-size:15.1px">ByLayer</div>
 <div class="wt" style="left:1840px;top:1130.5px;font-size:15.1px">0</div>
<svg class="a" style="left:1280px;top:1172px" width="650" height="36" viewBox="1280 1172 650 36">
 <rect x="1282" y="1174" width="1.2" height="30" fill="#262b34"/>
 <!-- active buttons -->
 <g fill="#5b82b4"><rect x="1444.7" y="1175.3" width="26.6" height="26.7"/><rect x="1503.7" y="1175.3" width="26.3" height="26.7"/><rect x="1621.3" y="1175.3" width="26.8" height="26.7"/><rect x="1650.9" y="1175.3" width="26.8" height="26.7"/><rect x="1710" y="1175.3" width="26.1" height="26.7"/><rect x="1739" y="1175.3" width="27" height="26.7"/></g>
 <!-- grid -->
 <path d="M1452.6 1179V1198.6M1457.9 1179V1198.6M1463.3 1179V1198.6M1448 1183.2H1468M1448 1188.6H1468M1448 1193.9H1468" stroke="#fff" stroke-width="1.7"/>
 <!-- snap dots -->
 <g fill="#e6e6e6"><rect x="1479.1" y="1180.3" width="3" height="3"/><rect x="1486.1" y="1180.3" width="3" height="3"/><rect x="1492.8" y="1180.3" width="3" height="3"/><rect x="1479.1" y="1187.3" width="3" height="3"/><rect x="1486.1" y="1187.3" width="3" height="3"/><rect x="1492.8" y="1187.3" width="3" height="3"/><rect x="1479.1" y="1193.8" width="3" height="3"/><rect x="1486.1" y="1193.8" width="3" height="3"/><rect x="1492.8" y="1193.8" width="3" height="3"/></g>
 <!-- ortho -->
 <path d="M1506.7 1178V1199.1H1527.7M1506.7 1191.8H1514V1199" fill="none" stroke="#f2f2f2" stroke-width="1.6"/>
 <!-- polar -->
 <circle cx="1544.5" cy="1189.3" r="8.4" fill="none" stroke="#e3e3e3" stroke-width="1.5"/><path d="M1554.5 1179.8L1544.8 1189.3H1557" fill="none" stroke="#e3e3e3" stroke-width="1.5"/>
 <!-- track -->
 <path d="M1564.7 1185H1574.7M1569.7 1180V1190" stroke="#e6e6e6" stroke-width="1.5"/><rect x="1573.4" y="1191.6" width="13.1" height="5.2" fill="#dedede"/><rect x="1575" y="1193" width="1.2" height="2.5" fill="#5d6470"/>
 <!-- lineweight -->
 <g fill="#dedede"><rect x="1594.4" y="1180" width="10" height="3"/><rect x="1604" y="1180" width="11.8" height="1.6"/><rect x="1594.4" y="1185.5" width="10" height="4"/><rect x="1604" y="1185.5" width="11.8" height="2.2"/><rect x="1594.4" y="1192" width="10" height="5"/><rect x="1604" y="1192" width="11.8" height="2"/></g>
 <!-- transparency checker -->
 <rect x="1626" y="1180.2" width="17.2" height="17.2" fill="none" stroke="#f4f4f4" stroke-width="1.5"/>
 <g fill="#f4f4f4"><rect x="1628" y="1182" width="2.7" height="2.7"/><rect x="1633.4" y="1182" width="2.7" height="2.7"/><rect x="1638.8" y="1182" width="2.7" height="2.7"/><rect x="1630.7" y="1184.7" width="2.7" height="2.7"/><rect x="1636.1" y="1184.7" width="2.7" height="2.7"/><rect x="1628" y="1187.4" width="2.7" height="2.7"/><rect x="1633.4" y="1187.4" width="2.7" height="2.7"/><rect x="1638.8" y="1187.4" width="2.7" height="2.7"/><rect x="1630.7" y="1190.1" width="2.7" height="2.7"/><rect x="1636.1" y="1190.1" width="2.7" height="2.7"/><rect x="1628" y="1192.8" width="2.7" height="2.7"/><rect x="1633.4" y="1192.8" width="2.7" height="2.7"/><rect x="1638.8" y="1192.8" width="2.7" height="2.7"/></g>
 <!-- selection cycling -->
 <path d="M1658 1178.5H1655.6V1196.5H1658M1666.5 1178.5H1668.7V1187.5" fill="none" stroke="#e8e8e8" stroke-width="1.3"/>
 <rect x="1659.3" y="1181.5" width="5.6" height="4" fill="none" stroke="#e8e8e8" stroke-width="1.1"/><circle cx="1662.1" cy="1190.7" r="2.7" fill="none" stroke="#e8e8e8" stroke-width="1.1"/>
 <path d="M1667 1188.5V1198L1669.3 1196L1671 1199.3L1672.6 1198.5L1671 1195.3H1674Z" fill="#f2f2f2"/>
 <!-- gizmo angle -->
 <path d="M1699 1181L1684 1196.3H1704" fill="none" stroke="#dcdcdc" stroke-width="1.6"/><circle cx="1691.5" cy="1188.6" r="1.6" fill="#dcdcdc"/>
 <!-- annotation monitor -->
 <rect x="1715.3" y="1181.8" width="18" height="17.2" fill="none" stroke="#f2f2f2" stroke-width="1.5"/><rect x="1712.4" y="1178.6" width="6.2" height="6.2" fill="#5b82b4" stroke="#f2f2f2" stroke-width="1.3"/>
 <!-- anno visibility -->
 <path transform="translate(-60.1 0)" d="M1811.3 1178.3L1814.9 1187L1813.9 1189.6L1816.5 1191.3L1820.7 1199.2L1813.4 1196.6Q1811.3 1192.8 1809.3 1196.6L1802 1199.2L1806.2 1191.3L1808.9 1189.6L1808 1187Z" fill="#f6f6f6"/><circle cx="1759.2" cy="1183.3" r="4.1" fill="#f6f6f6"/>
 <!-- autoscale -->
 <path transform="translate(-31.2 0)" d="M1811.3 1178.3L1814.9 1187L1813.9 1189.6L1816.5 1191.3L1820.7 1199.2L1813.4 1196.6Q1811.3 1192.8 1809.3 1196.6L1802 1199.2L1806.2 1191.3L1808.9 1189.6L1808 1187Z" fill="#d9d9d9"/>
 <path d="M1789 1178.3L1785.3 1183.6H1788L1786 1188L1791.8 1182H1789L1791.5 1178.3Z" fill="#f0cd55"/>
 <!-- anno scale -->
 <path d="M1811.3 1178.3L1814.9 1187L1813.9 1189.6L1816.5 1191.3L1820.7 1199.2L1813.4 1196.6Q1811.3 1192.8 1809.3 1196.6L1802 1199.2L1806.2 1191.3L1808.9 1189.6L1808 1187Z" fill="#d9d9d9"/>
 <path d="M1847.6 1185.8H1855.6L1851.6 1191.2Z" fill="#d0d0d0"/>
 <!-- isolate -->
 <rect x="1868.3" y="1178.9" width="8" height="7.6" fill="none" stroke="#e6e6e6" stroke-width="1.3"/><circle cx="1884.3" cy="1186.9" r="4.2" fill="none" stroke="#e6e6e6" stroke-width="1.3"/><path d="M1876.3 1191.2L1880.8 1198.6H1871.8Z" fill="none" stroke="#e6e6e6" stroke-width="1.3"/>
 <!-- gear -->
 <g transform="translate(1907.8 1188.7)" fill="#e0e0e0">
  <circle r="7.6"/>
  <g id="tooth"><rect x="-2.6" y="-10.2" width="5.2" height="4.5"/></g>
  <use href="#tooth" transform="rotate(45)"/><use href="#tooth" transform="rotate(90)"/><use href="#tooth" transform="rotate(135)"/><use href="#tooth" transform="rotate(180)"/><use href="#tooth" transform="rotate(225)"/><use href="#tooth" transform="rotate(270)"/><use href="#tooth" transform="rotate(315)"/>
  <circle r="3.3" fill="#3b4352"/>
 </g>
</svg>
<div class="t" style="left:1298.8px;top:1179px;font-size:15.66px;line-height:19px;color:#c6c9ce">2.080, -1.007, 0.000</div>
<div class="t" style="left:1824.8px;top:1179px;font-size:15.6px;line-height:19px;color:#c8c8c8;transform:scaleX(.8);transform-origin:0 0">1:1</div>
<svg class="a" style="left:1612px;top:855px" width="316" height="310" viewBox="1612 855 316 310">
 <!-- properties edit icon -->
 <path d="M1878 861H1866.5V875.5H1871" fill="none" stroke="#8b919a" stroke-width="1.2"/><path d="M1868.5 864.5H1876M1868.5 867.5H1876M1868.5 870.5H1873" stroke="#8b919a" stroke-width="1.1"/>
 <path d="M1872.5 876.5L1873.5 872.5L1881 865L1884.5 868.5L1877 876Z" fill="#8b919a"/>
 <!-- dock -->
 <path d="M1905 867V861H1913.8V875.5H1905V870.5" fill="none" stroke="#efefef" stroke-width="1.3"/>
 <path d="M1904.5 868.8H1900.5M1903 866.3L1900.2 868.8L1903 871.3" fill="none" stroke="#efefef" stroke-width="1.4"/>
 <!-- model space arrow -->
 <path d="M1898.4 903H1906.4L1902.4 909Z" fill="#858b94"/>
 <!-- general chevron -->
 <path d="M1630.5 946.8L1635.8 952.3L1641.2 946.8" fill="none" stroke="#23272e" stroke-width="1.5"/>
 <!-- prop arrows -->
 <g fill="#e8e8e8"><path d="M1895.8 982.2H1903.8L1899.8 988.2Z"/><path d="M1895.8 1013.2H1903.8L1899.8 1019.2Z"/><path d="M1895.8 1044.2H1903.8L1899.8 1050.2Z"/><path d="M1895.8 1105.5H1903.8L1899.8 1111.5Z"/><path d="M1895.8 1136.5H1903.8L1899.8 1142.5Z"/></g>
 <rect x="1798.8" y="980.3" width="11.2" height="10.3" fill="#62ea4a" stroke="#0a0a0a" stroke-width="1.5"/>
 <path d="M1796 1047.2H1839.3" stroke="#f0f0f0" stroke-width="1.6"/>
 <path d="M1791.5 1130.5V1133M1791.5 1145.5V1148" stroke="#5fa4f0" stroke-width="1.6"/><path d="M1819.8 1143V1148" stroke="#8a919c" stroke-width="1"/>
 <path d="M1875 1131.8H1885.8L1881 1137H1869.5Z" fill="#8ec6f4"/><path d="M1885.5 1135.8L1881 1141H1869.5V1139.5H1880.3L1884.5 1135ZM1885.5 1140L1881 1145.2H1869.5V1143.7H1880.3L1884.5 1139.2Z" fill="#e0e0e0"/>
</svg>

</div>
</body></html>
